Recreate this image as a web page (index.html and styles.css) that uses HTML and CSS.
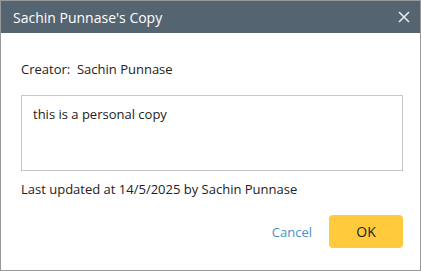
FILE: index.html
```html
<!DOCTYPE html>
<html lang="en">
  <head>
    <meta charset="UTF-8" />
    <title>Sachin Punnase's Copy</title>
    <link rel="stylesheet" href="styles.css">
  </head>
  <body>
    <div class="dialog">
      <div class="dialog-header">
        <span class="dialog-title">Sachin Punnase's Copy</span>
        <button class="close-btn" aria-label="Close">
          <svg width="12" height="12" viewBox="0 0 12 12">
            <path d="M1 1 L11 11 M11 1 L1 11" stroke="#e6eaec" stroke-width="1.6" fill="none" />
          </svg>
        </button>
      </div>
      <div class="dialog-body">
        <div class="creator">Creator:&nbsp; Sachin Punnase</div>
        <div class="note-box">this is a personal copy</div>
        <div class="updated">Last updated at 14/5/2025 by Sachin Punnase</div>
        <div class="actions">
          <button class="cancel-btn">Cancel</button>
          <button class="ok-btn">OK</button>
        </div>
      </div>
    </div>
  </body>
</html>
```

FILE: styles.css
```css
* {
  margin: 0;
  padding: 0;
  box-sizing: border-box;
}
body {
  font-family: "Open Sans", "Noto Sans", sans-serif;
  background: #fff;
}
.dialog {
  width: 421px;
  height: 271px;
  border: 1px solid #999;
  display: flex;
  flex-direction: column;
}
.dialog-header {
  height: 32px;
  background-color: #546571;
  display: flex;
  align-items: center;
  justify-content: space-between;
  padding: 0 8px 0 12px;
}
.dialog-title {
  color: #fff;
  font-size: 14px;
}
.close-btn {
  background: none;
  border: none;
  width: 16px;
  height: 16px;
  display: flex;
  align-items: center;
  justify-content: center;
  cursor: pointer;
}
.dialog-body {
  padding: 27px 17px 0 20px;
  font-size: 13px;
  color: #222;
}
.creator {
  line-height: 18px;
  margin-bottom: 17px;
}
.note-box {
  height: 76px;
  border: 1px solid #c6c6c6;
  padding: 9px 11px;
  line-height: 18px;
}
.updated {
  margin-top: 9px;
  line-height: 18px;
}
.actions {
  margin-top: 17px;
  display: flex;
  justify-content: flex-end;
  align-items: center;
}
.cancel-btn {
  background: none;
  border: none;
  font-family: inherit;
  font-size: 13px;
  color: #4a8fc9;
  margin-right: 17px;
  cursor: pointer;
}
.ok-btn {
  width: 74px;
  height: 33px;
  border: none;
  border-radius: 4px;
  background-color: #ffcb3d;
  font-family: inherit;
  font-size: 14px;
  color: #222;
  cursor: pointer;
}
```
